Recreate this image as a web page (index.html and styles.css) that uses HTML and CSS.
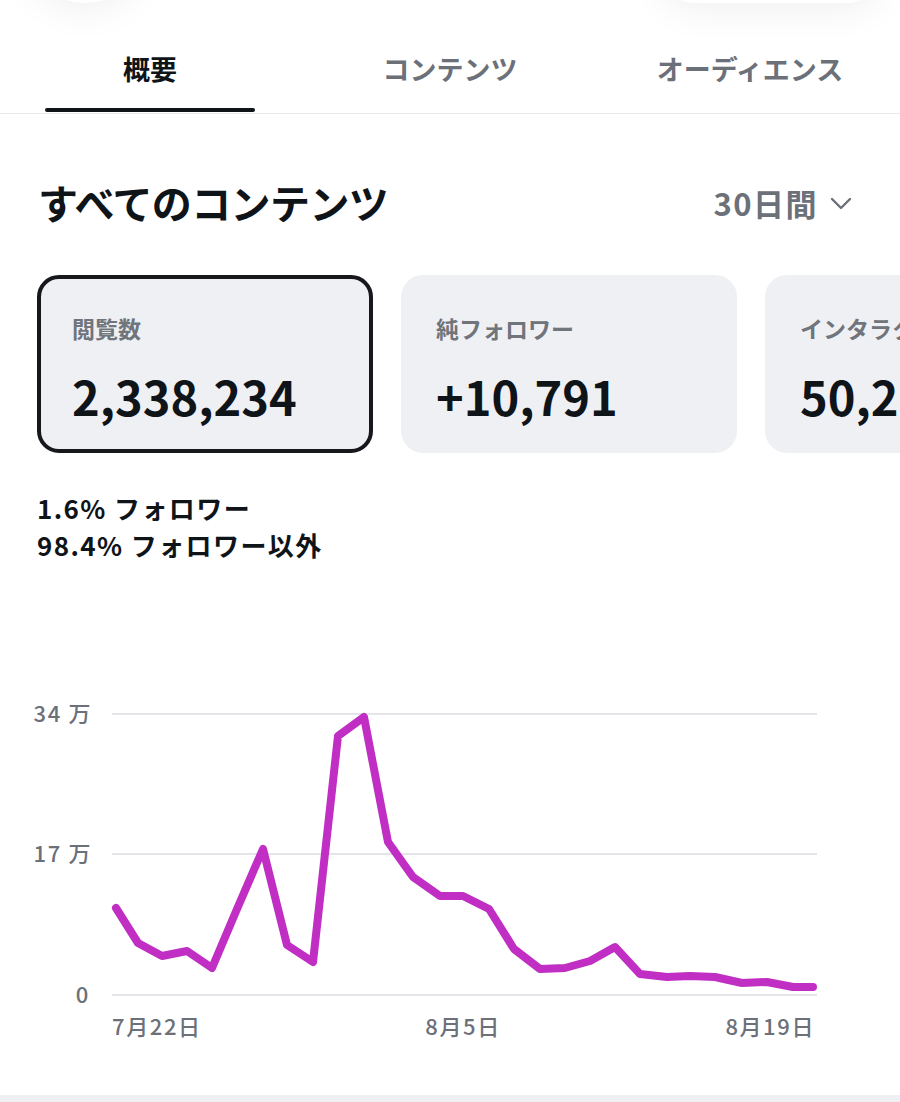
FILE: index.html
```html
<!DOCTYPE html>
<html lang="ja">
<head>
<meta charset="utf-8">
<title>アナリティクス</title>
<link rel="stylesheet" href="styles.css">
</head>
<body>
<div class="page">
  <div class="float-btn float-left"></div>
  <div class="float-btn float-right"></div>

  <nav class="tabs">
    <div class="tab active"><span class="tab-label">概要</span><span class="tab-bar"></span></div>
    <div class="tab"><span class="tab-label">コンテンツ</span><span class="tab-bar"></span></div>
    <div class="tab"><span class="tab-label">オーディエンス</span><span class="tab-bar"></span></div>
  </nav>

  <header class="section-head">
    <h1 class="title">すべてのコンテンツ</h1>
    <div class="range">30日間
      <svg class="chev" width="22" height="14" viewBox="0 0 22 14"><polyline points="2,3 11,12 20,3" fill="none" stroke="#6b7079" stroke-width="2.4" stroke-linecap="round" stroke-linejoin="round"/></svg>
    </div>
  </header>

  <div class="cards">
    <div class="card selected">
      <div class="card-label">閲覧数</div>
      <div class="card-value">2,338,234</div>
    </div>
    <div class="card">
      <div class="card-label">純フォロワー</div>
      <div class="card-value">+10,791</div>
    </div>
    <div class="card">
      <div class="card-label">インタラクション</div>
      <div class="card-value">50,2</div>
    </div>
  </div>

  <div class="split">
    <div>1.6% フォロワー</div>
    <div>98.4% フォロワー以外</div>
  </div>

  <div class="chart">
    <svg width="900" height="370" viewBox="0 690 900 370">
      <g stroke="#e4e5e8" stroke-width="2">
        <line x1="112" y1="715" x2="817" y2="715"/>
        <line x1="112" y1="855" x2="817" y2="855"/>
        <line x1="112" y1="996" x2="817" y2="996"/>
      </g>
      <g class="axis">
        <text x="92" y="723" text-anchor="end">34 万</text>
        <text x="92" y="863" text-anchor="end">17 万</text>
        <text x="90" y="1004" text-anchor="end">0</text>
        <text x="112" y="1036" text-anchor="start">7月22日</text>
        <text x="463" y="1036" text-anchor="middle">8月5日</text>
        <text x="815" y="1036" text-anchor="end">8月19日</text>
      </g>
      <polyline fill="none" stroke="#c02ec4" stroke-width="8" stroke-linejoin="round" stroke-linecap="round"
        points="116,909 138,944 162,957 187,952 212,969 237,910 263,850 287,946 313,963 338,737 364,718 388,843 413,878 440,897 463,897 489,910 514,950 540,970 565,969 590,962 615,948 640,975 667,978 690,977 715,978 742,984 767,983 793,988 813,988"/>
    </svg>
  </div>

  <div class="bottom-band"></div>
</div>
</body>
</html>
```

FILE: styles.css
```css
html, body {
  margin: 0;
  padding: 0;
  background: #ffffff;
}

body {
  font-family: "Noto Sans CJK JP", "Noto Sans", "Liberation Sans", sans-serif;
  color: #0f1419;
}

.page {
  position: relative;
  width: 900px;
  height: 1102px;
  overflow: hidden;
}

.float-btn {
  position: absolute;
  background: #ffffff;
  box-shadow: 0 4px 40px rgba(0, 0, 0, 0.07);
}

.float-left {
  left: 30px;
  top: -104px;
  width: 110px;
  height: 107px;
  border-radius: 55px;
}

.float-right {
  left: 662px;
  top: -60px;
  width: 218px;
  height: 63px;
  border-radius: 32px;
}

.tabs {
  display: grid;
  grid-template-columns: 300px 300px 300px;
  height: 113px;
  border-bottom: 1px solid #e7e8eb;
}

.tab {
  display: flex;
  flex-direction: column;
  align-items: center;
  padding-top: 51px;
  box-sizing: border-box;
}

.tab-label {
  font-size: 27px;
  font-weight: 700;
  line-height: 36px;
  color: #6b7079;
}

.tab.active .tab-label {
  color: #0f1419;
}

.tab-bar {
  margin-top: auto;
  margin-bottom: 1px;
  width: 210px;
  height: 4px;
  border-radius: 2px;
  background: transparent;
}

.tab.active .tab-bar {
  background: #0f1419;
}

.section-head {
  display: flex;
  align-items: center;
  justify-content: space-between;
  margin-top: 60px;
  padding: 0 48px 0 38px;
  height: 56px;
}

.title {
  margin: 0;
  font-size: 40px;
  font-weight: 700;
  line-height: 56px;
  color: #0f1419;
  letter-spacing: -0.6px;
}

.range {
  display: flex;
  align-items: center;
  gap: 12px;
  font-size: 31px;
  font-weight: 700;
  color: #6b7079;
  letter-spacing: 1.5px;
}

.chev {
  display: block;
  margin-top: 2px;
}

.cards {
  display: flex;
  gap: 28px;
  margin-top: 45px;
  padding-left: 37px;
}

.card {
  flex: 0 0 auto;
  box-sizing: border-box;
  width: 336px;
  height: 178px;
  border: 4px solid #eff0f4;
  border-radius: 22px;
  background: #eff0f4;
  padding: 34px 0 0 31px;
  overflow: hidden;
  white-space: nowrap;
}

.card.selected {
  border-color: #16181c;
}

.card-label {
  font-size: 23px;
  font-weight: 700;
  line-height: 30px;
  color: #70747b;
}

.card-value {
  margin-top: 25px;
  font-size: 47px;
  font-weight: 700;
  line-height: 56px;
  color: #0f1419;
}

.split {
  margin-top: 36px;
  padding-left: 37px;
  font-size: 26px;
  font-weight: 700;
  line-height: 37px;
  color: #0f1419;
  letter-spacing: 1.4px;
}

.chart {
  margin-top: 126px;
  height: 370px;
}

.chart svg {
  display: block;
}

.axis text {
  font-family: "Noto Sans CJK JP", "Noto Sans", sans-serif;
  font-size: 22px;
  font-weight: 500;
  fill: #6b7079;
  letter-spacing: 1.6px;
}

.bottom-band {
  margin-top: 36px;
  height: 10px;
  background: #eff0f3;
}
```
